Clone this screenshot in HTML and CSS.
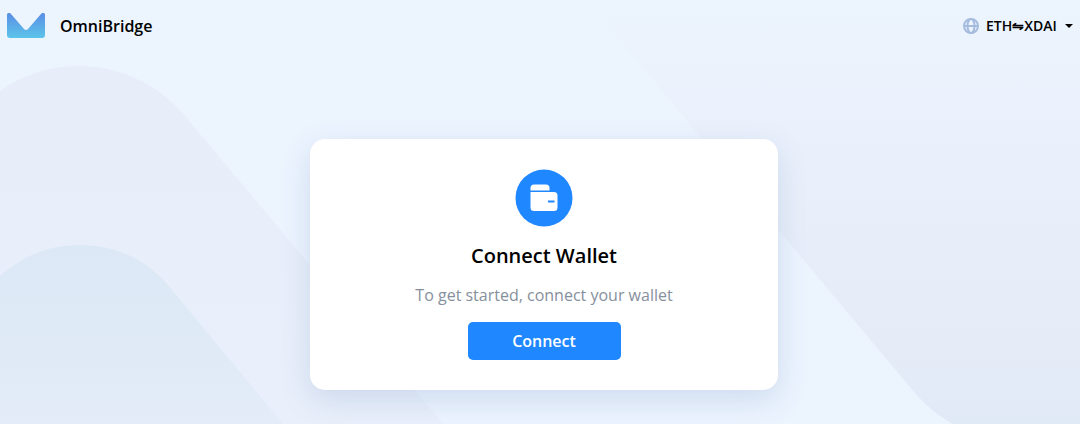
FILE: index.html
```
<!DOCTYPE html>
<html lang="en">
<head>
    <meta charset="UTF-8">
    <meta name="viewport" content="width=device-width, initial-scale=1.0">
    <title>OmniBridge</title>
    <link rel="stylesheet" href="styles.css">
</head>
<body>
    <!-- Background waves -->
    <svg class="waves" viewBox="0 0 1080 424" preserveAspectRatio="xMidYMin slice" aria-hidden="true">
        <defs>
            <linearGradient id="wave-right" x1="0" y1="0" x2="0" y2="1">
                <stop offset="0" stop-color="#ecf4fe"/>
                <stop offset="0.5" stop-color="#e8effa"/>
                <stop offset="0.8" stop-color="#e5ecf8"/>
                <stop offset="1" stop-color="#e0eaf6"/>
            </linearGradient>
            <linearGradient id="wave-left" x1="0" y1="0" x2="0" y2="1">
                <stop offset="0" stop-color="#e7edf9"/>
                <stop offset="1" stop-color="#e9f0fb"/>
            </linearGradient>
            <linearGradient id="wave-front" x1="0" y1="0" x2="0" y2="1">
                <stop offset="0" stop-color="#dce8f6"/>
                <stop offset="1" stop-color="#e3ecf8"/>
            </linearGradient>
        </defs>
        <path fill="url(#wave-right)" d="M586 0H1080V424H953C940 417 926 406 914 392Z"/>
        <path fill="url(#wave-left)" d="M0 91C23 75 49 66 78 66C119 66 157 83 185 116L443 424H0Z"/>
        <path fill="url(#wave-front)" d="M0 276C22 256 49 245 80 245C115 245 146 259 168 285L283 424H0Z"/>
    </svg>

    <header class="header">
        <a class="brand" href="#">
            <svg class="logo" viewBox="0 0 38 25" aria-hidden="true">
                <defs>
                    <linearGradient id="logo-fill" x1="0" y1="0" x2="0" y2="1">
                        <stop offset="0" stop-color="#5b8de6"/>
                        <stop offset="1" stop-color="#5cc5e9"/>
                    </linearGradient>
                </defs>
                <path fill="url(#logo-fill)" d="M0 2C0 0 2-1 4 1L17 16Q19 18 21 16L34 1C36-1 38 0 38 2V22Q38 25 35 25H3Q0 25 0 22Z"/>
            </svg>
            OmniBridge
        </a>
        <div class="network">
            <svg class="globe" viewBox="0 0 16 16" aria-hidden="true">
                <circle cx="8" cy="8" r="7"/>
                <ellipse cx="8" cy="8" rx="3.5" ry="7"/>
                <path d="M1 8H15"/>
            </svg>
            <select class="network-select" aria-label="Bridge network">
                <option>ETH⇋XDAI</option>
            </select>
            <svg class="caret" viewBox="0 0 8 4" aria-hidden="true"><path d="M0 0H8L4 4Z"/></svg>
        </div>
    </header>

    <main class="main">
        <section class="card">
            <svg class="wallet" viewBox="0 0 58 58" aria-hidden="true">
                <circle cx="29" cy="29" r="28.5" fill="#1f87ff"/>
                <path fill="#fff" d="M15.500 21.500V19Q15.500 15.500 19 15.500H31Q34.500 15.500 34.500 19V21.500Z"/>
                <path fill="#fff" d="M15.500 23H39Q42.500 23 42.500 26.500V38.500Q42.500 42 39 42H19Q15.500 42 15.500 38.500Z"/>
                <path stroke="#1f87ff" stroke-width="2" d="M33 32.500H39.500"/>
            </svg>
            <h1>Connect Wallet</h1>
            <p>To get started, connect your wallet</p>
            <button type="button">Connect</button>
        </section>
    </main>
</body>
</html>
```
FILE: styles.css
```
* {
    box-sizing: border-box;
}
body {
    margin: 0;
    min-height: 100vh;
    position: relative;
    font-family: "Open Sans", "Noto Sans", sans-serif;
    background-color: #ecf4fe;
    color: #000;
}
.waves {
    position: absolute;
    top: 0;
    left: 0;
    width: 100%;
    height: 100%;
    z-index: -1;
}
.header {
    display: flex;
    justify-content: space-between;
    align-items: center;
    height: 51px;
    padding: 0 7px;
}
.brand {
    display: flex;
    align-items: center;
    gap: 15px;
    color: inherit;
    font-size: 16px;
    font-weight: 600;
    text-decoration: none;
}
.logo {
    width: 38px;
    height: 25px;
}
.network {
    display: flex;
    align-items: center;
}
.globe {
    width: 16px;
    height: 16px;
    margin-right: 7px;
    fill: none;
    stroke: #a5bcdf;
    stroke-width: 2;
}
.network-select {
    appearance: none;
    border: none;
    padding: 0;
    margin-right: 8px;
    background: none;
    color: inherit;
    font-family: inherit;
    font-size: 14px;
    font-weight: 600;
    cursor: pointer;
}
.caret {
    width: 8px;
    height: 4px;
}
.main {
    display: flex;
    justify-content: center;
    padding: 88px 0 34px 8px;
}
.card {
    display: flex;
    flex-direction: column;
    align-items: center;
    width: 100%;
    max-width: 468px;
    padding: 30px 24px;
    background-color: #fff;
    border-radius: 15px;
    box-shadow: 0 10px 30px rgba(70, 110, 170, 0.18);
}
.wallet {
    width: 58px;
    height: 58px;
}
h1 {
    margin: 14px 0 0;
    font-size: 20px;
    font-weight: 600;
    line-height: 30px;
}
p {
    margin: 11px 0 14px;
    color: #86909c;
    font-size: 16px;
    line-height: 26px;
}
button {
    width: 153px;
    height: 38px;
    border: none;
    border-radius: 5px;
    background-color: #1f87ff;
    color: #fff;
    font-family: inherit;
    font-size: 16px;
    font-weight: 600;
    cursor: pointer;
}
button:hover {
    background-color: #0f74e8;
}
```
